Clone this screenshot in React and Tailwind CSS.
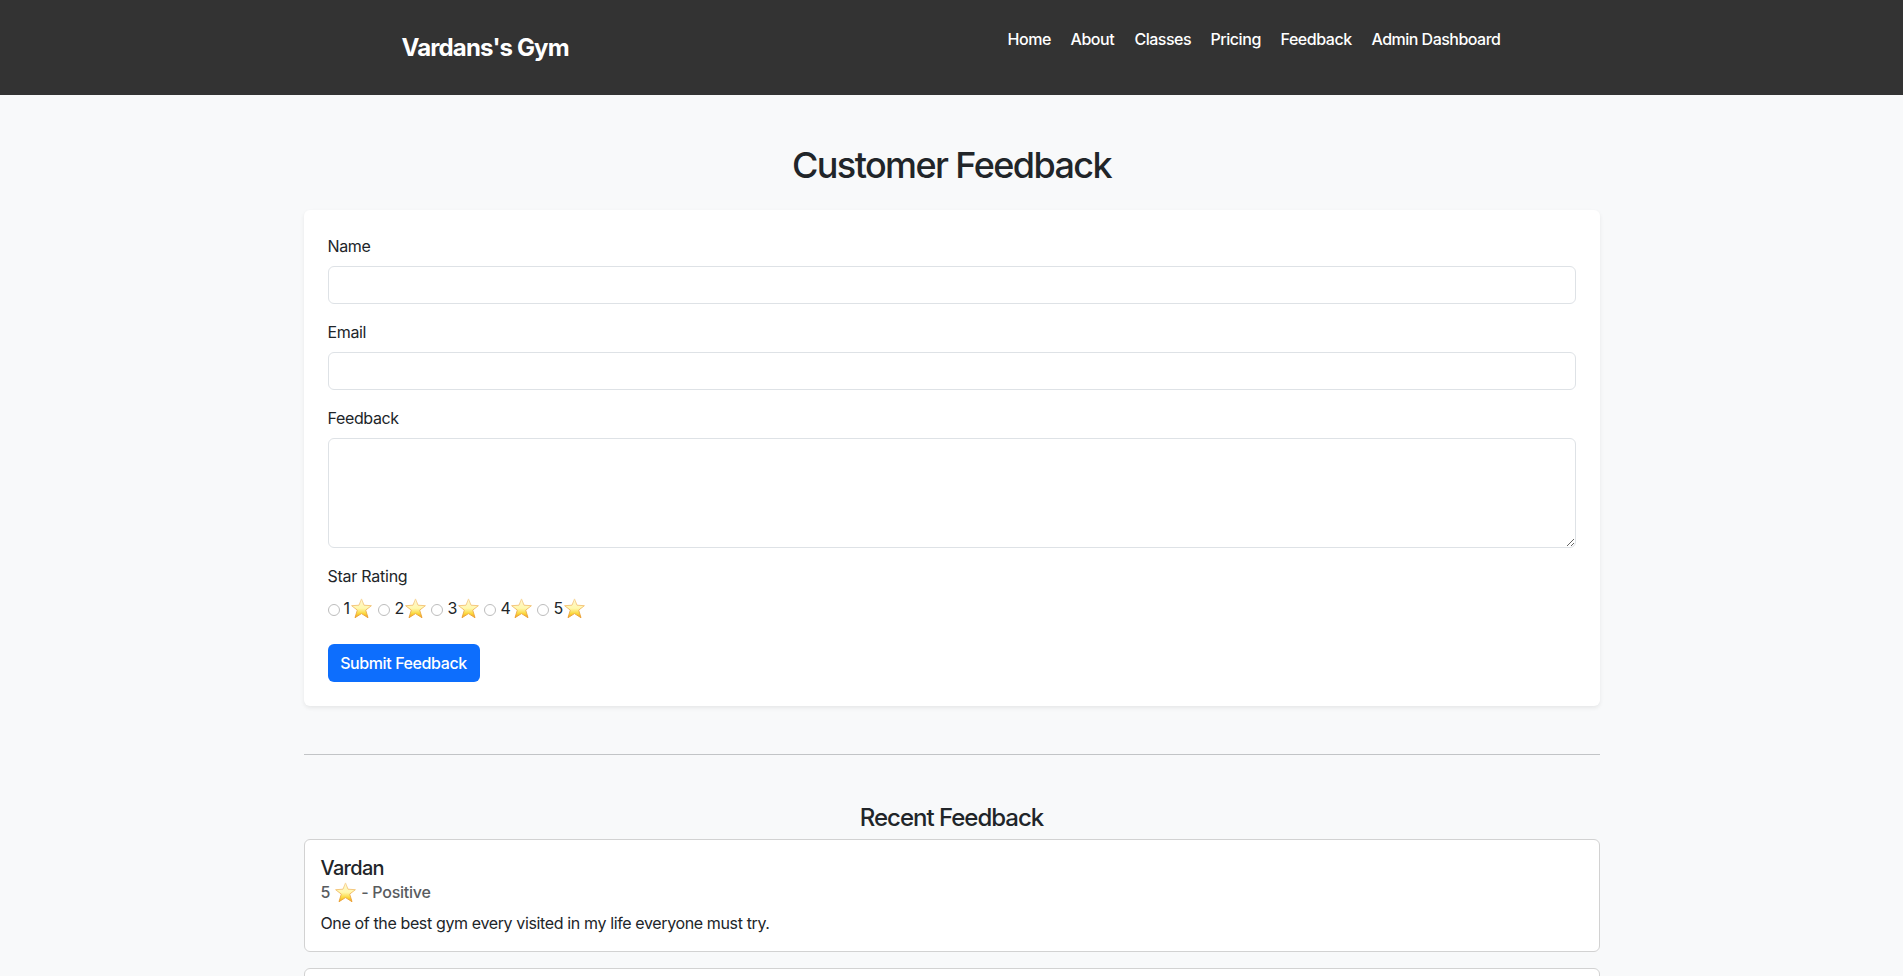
const NAV = [
  ['Home', 'w-[43px]', 'tracking-[-0.4px]'],
  ['About', 'w-[44px]', 'tracking-[-0.45px]'],
  ['Classes', 'w-[56px]', 'tracking-[-0.5px]'],
  ['Pricing', 'w-[50px]', 'tracking-[-0.45px]'],
  ['Feedback', 'w-[71px]', 'tracking-[-0.45px]'],
  ['Admin Dashboard', 'w-[130px]', 'tracking-[-0.52px]'],
];

function Star({ className = '' }) {
  return (
    <svg viewBox="0 0 21 21" className={`h-[21px] w-[21px] shrink-0 ${className}`} aria-hidden="true">
      <defs>
        <linearGradient id="gold" x1="0" y1="0" x2="0" y2="1">
          <stop offset="0" stopColor="#fff6cf" />
          <stop offset="0.5" stopColor="#fff8ae" />
          <stop offset="0.78" stopColor="#fbd83c" />
          <stop offset="1" stopColor="#f2a31c" />
        </linearGradient>
        <linearGradient id="rim" x1="0" y1="0" x2="0" y2="1">
          <stop offset="0" stopColor="#f8d79a" />
          <stop offset="1" stopColor="#e99a2b" />
        </linearGradient>
      </defs>
      <path
        d="M10.5 0.9 13 7.2 20.4 7.7 14.7 12.1 17 19.7 10.5 15.6 4 19.7 6.3 12.1 0.6 7.7 8 7.2Z"
        fill="url(#gold)"
        stroke="url(#rim)"
        strokeWidth="0.9"
        strokeLinejoin="round"
      />
    </svg>
  );
}

function Field({ label, children }) {
  return (
    <div className="mb-4">
      <label className="mb-2 block h-6 tracking-[-0.36px]">{label}</label>
      {children}
    </div>
  );
}

export default function App() {
  const input = 'block w-full rounded-md border border-[#dee2e6] bg-white px-3';
  return (
    <div className="h-[976px] overflow-hidden bg-[#f8f9fa] font-['Inter',sans-serif] text-base leading-6 text-[#212529]">
      <header className="h-[95px] bg-[#333]">
        <div className="mx-auto flex w-[1100px] items-start justify-between">
          <div className="mt-[32px] text-2xl leading-8 font-bold tracking-[-0.85px] whitespace-nowrap text-white">Vardans's Gym</div>
          <nav className="mt-[27px] flex gap-5 font-medium text-white">
            {NAV.map(([name, width, track]) => (
              <a key={name} href="#" className={`whitespace-nowrap ${width} ${track}`}>{name}</a>
            ))}
          </nav>
        </div>
      </header>
      <main className="mx-auto w-[1296px] pt-[46px]">
        <h1 className="mb-[21px] text-center text-4xl leading-[48px] font-medium tracking-[-1.6px]">Customer Feedback</h1>
        <form className="h-[496px] rounded-md bg-white p-6 shadow-[0_2px_4px_rgba(0,0,0,0.075)]">
          <Field label="Name"><input className={`${input} h-[38px]`} /></Field>
          <Field label="Email"><input className={`${input} h-[38px]`} /></Field>
          <Field label="Feedback"><textarea className={`${input} h-[110px] resize-y`} /></Field>
          <div className="mb-2 h-6 tracking-[-0.25px]">Star Rating</div>
          <div className="flex h-6 items-center">
            {[1, 2, 3, 4, 5].map((n) => (
              <label key={n} className={`flex items-center ${n === 1 ? 'w-[50px]' : 'w-[53px]'}`}>
                <input type="radio" name="rating" className="mt-1 size-3 shrink-0 appearance-none rounded-full border border-[#bdbdbd] bg-white" />
                <span className={n === 1 ? 'ml-1 w-[7px]' : 'ml-[5px] w-[10px]'}>{n}</span>
                <Star />
              </label>
            ))}
          </div>
          <button type="button" className="mt-6 h-[38px] w-[152px] rounded-md bg-[#0d6efd] font-medium tracking-[-0.4px] whitespace-nowrap text-white">Submit Feedback</button>
        </form>
        <hr className="mt-12 border-[#c2c4c6]" />
        <h2 className="mt-12 mb-[7px] text-center text-2xl leading-[29px] font-medium tracking-[-1px]">Recent Feedback</h2>
        <article className="h-[113px] rounded-md border border-[#d2d2d2] bg-white px-4 pt-4">
          <h3 className="text-xl leading-6 font-medium tracking-[-0.7px]">Vardan</h3>
          <div className="flex h-6 items-center font-medium tracking-[-0.25px] text-[#595c5f]">
            5<Star className="mr-[5px] ml-[5px]" />- Positive
          </div>
          <p className="mt-[7px] tracking-[-0.37px]">One of the best gym every visited in my life everyone must try.</p>
        </article>
        <article className="mt-4 h-[113px] rounded-md border border-[#d2d2d2] bg-white" />
      </main>
    </div>
  );
}
